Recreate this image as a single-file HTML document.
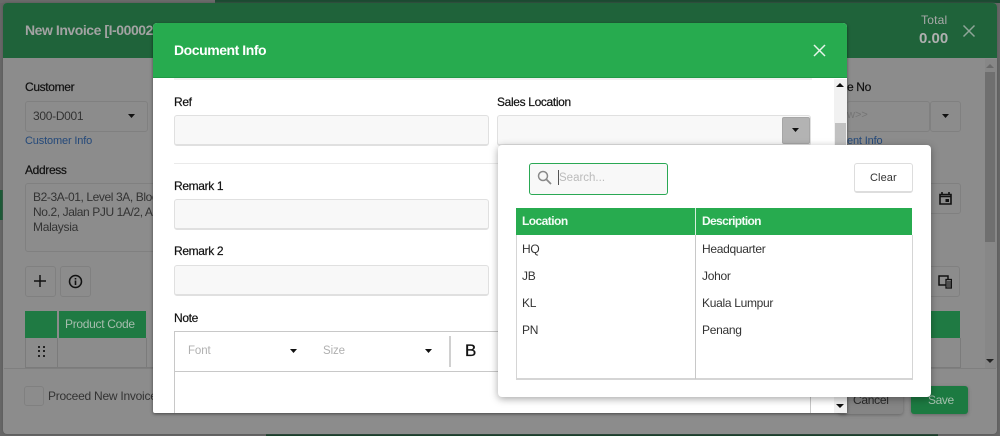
<!DOCTYPE html>
<html><head><meta charset="utf-8"><style>
html,body{margin:0;padding:0}
body{width:1000px;height:436px;overflow:hidden;position:relative;background:#666;font-family:"Liberation Sans",Arial,sans-serif;font-size:12px;color:#222}
div,span,svg{position:absolute;box-sizing:border-box}
.t{white-space:nowrap;line-height:14px}
.b .t{color:#222}
.bi{background:#8c8c8c;border:1px solid #808080;border-radius:3px}
.in{background:#f8f8f8;border:1px solid #e0e0e0;border-bottom:2px solid #e0e0e0;border-radius:3px}
.l{font-size:12px;color:#111;letter-spacing:-.35px;-webkit-text-stroke:.2px #111}
.r{color:#333;font-size:12px;letter-spacing:-.3px}
</style></head><body>
<div style="left:0;top:0;width:215px;height:3px;background:#6a6a6a"></div>
<div style="left:215px;top:0;width:785px;height:3px;background:#1b4a31"></div>
<div style="left:0;top:190px;width:3px;height:30px;background:#1b5a36"></div>
<div style="left:266px;top:433px;width:672px;height:3px;background:#173f2a"></div>

<div class="b" style="left:3px;top:3px;width:994px;height:431px;background:#8c8c8c;border-radius:4px;box-shadow:0 0 2px #555">
 <div style="left:0;top:0;width:994px;height:55px;background:#1f633a;border-radius:4px 4px 0 0"></div>
</div>
<div class="t" style="left:25px;top:23px;font-size:14px;font-weight:bold;color:#a3a3a3;letter-spacing:-.45px">New Invoice [I-00002</div>
<div class="t" style="left:921px;top:13px;font-size:12px;color:#a9a9a9;letter-spacing:.2px">Total</div>
<div class="t" style="left:919px;top:32px;font-size:15px;font-weight:bold;color:#b0b0b0">0.00</div>
<svg style="left:962px;top:24px" width="14" height="14"><path d="M1.5 1.500L12.500 12.500M12.500 1.500L1.500 12.500" stroke="#8fa598" stroke-width="1.500"/></svg>

<div class="t l" style="left:25px;top:80px">Customer</div>
<div class="bi" style="left:25px;top:101px;width:123px;height:31px"></div>
<div class="t r" style="left:33px;top:109px">300-D001</div>
<svg style="left:128px;top:114px" width="7" height="4"><path d="M0 0H7L3.500 4Z" fill="#111"/></svg>
<div class="t" style="left:25px;top:134px;font-size:11px;color:#24497a;letter-spacing:-.15px">Customer Info</div>
<div class="t l" style="left:25px;top:163px">Address</div>
<div class="bi" style="left:25px;top:183px;width:140px;height:69px"></div>
<div class="t r" style="left:33px;top:190px;width:120px;overflow:hidden;letter-spacing:-.4px">B2-3A-01, Level 3A, Block</div>
<div class="t r" style="left:33px;top:205px;width:120px;overflow:hidden;letter-spacing:-.4px">No.2, Jalan PJU 1A/2, Ara</div>
<div class="t r" style="left:33px;top:220px">Malaysia</div>
<div class="bi" style="left:25px;top:266px;width:31px;height:31px"></div>
<svg style="left:33px;top:274px" width="14" height="14"><path d="M7 1V13M1 7H13" stroke="#111" stroke-width="1.500"/></svg>
<div class="bi" style="left:60px;top:266px;width:31px;height:31px"></div>
<svg style="left:68px;top:274px" width="15" height="15" viewBox="0 0 15 15"><circle cx="7.500" cy="7.500" r="6" fill="none" stroke="#111" stroke-width="1.500"/><path d="M7.500 6.500V11M7.500 4V5.500" stroke="#111" stroke-width="1.600"/></svg>
<div style="left:25px;top:311px;width:122px;height:27px;background:#1f7a43"></div>
<div style="left:57px;top:311px;width:2px;height:27px;background:#8c8c8c"></div>
<div style="left:146px;top:311px;width:2px;height:27px;background:#8c8c8c"></div>
<div class="t" style="left:65px;top:317px;color:#a6bdae;letter-spacing:-.3px">Product Code</div>
<div style="left:25px;top:338px;width:128px;height:30px;border-left:1px solid #7b7b7b;border-bottom:1px solid #7b7b7b"></div>
<div style="left:57px;top:338px;width:1px;height:30px;background:#7b7b7b"></div>
<div style="left:146px;top:338px;width:1px;height:30px;background:#7b7b7b"></div>
<svg style="left:38px;top:345px" width="8" height="13"><g fill="#222"><rect x="0" y="1" width="2" height="2"/><rect x="5" y="1" width="2" height="2"/><rect x="0" y="5" width="2" height="2"/><rect x="5" y="5" width="2" height="2"/><rect x="0" y="10" width="2" height="2"/><rect x="5" y="10" width="2" height="2"/></g></svg>
<div style="left:4px;top:368px;width:992px;height:1px;background:#7f7f7f"></div>
<div class="bi" style="left:24px;top:386px;width:20px;height:20px"></div>
<div class="t r" style="left:48px;top:389px;letter-spacing:-.25px">Proceed New Invoice</div>

<div class="t l" style="left:847px;top:80px">e No</div>
<div class="bi" style="top:101px;height:31px;left:847px;width:83px;border-left:0"></div>
<div class="t" style="left:847px;top:108px;font-size:11px;color:#757575">w&gt;&gt;</div>
<div class="bi" style="left:930px;top:101px;width:31px;height:31px"></div>
<svg style="left:942px;top:114px" width="7" height="4"><path d="M0 0H7L3.500 4Z" fill="#111"/></svg>
<div class="t" style="left:847px;top:134px;font-size:11px;color:#24497a;letter-spacing:-.15px">ent Info</div>
<div class="bi" style="left:925px;top:183px;width:36px;height:31px"></div>
<svg style="left:939px;top:191px" width="13" height="14" viewBox="0 0 13 14"><path d="M1 3.500H12V13H1ZM1 5.500H12" fill="none" stroke="#111" stroke-width="1.600"/><path d="M3 1V3M10 1V3" stroke="#111" stroke-width="1.600"/><rect x="6.500" y="8" width="3.500" height="3" fill="#111"/></svg>
<div class="bi" style="left:925px;top:266px;width:35px;height:31px"></div>
<svg style="left:938px;top:275px" width="14" height="14" viewBox="0 0 14 14"><path d="M8 10H1V1H10V4" fill="none" stroke="#111" stroke-width="1.500"/><rect x="8" y="4.500" width="5.500" height="8.500" fill="none" stroke="#111" stroke-width="1.300"/><path d="M9 7H13M9 9H13M9 11H13" stroke="#111"/></svg>
<div style="left:925px;top:311px;width:35px;height:27px;background:#1f7a43"></div>
<div style="left:925px;top:338px;width:36px;height:30px;border-right:1px solid #7b7b7b;border-bottom:1px solid #7b7b7b"></div>
<div style="left:985px;top:59px;width:12px;height:309px;background:#878787"></div>
<div style="left:985px;top:72px;width:10px;height:170px;background:#6f6f6f"></div>
<svg style="left:986px;top:64px" width="8" height="5"><path d="M0 4H8L4 0Z" fill="#6a6a6a"/></svg>
<svg style="left:986px;top:359px" width="8" height="5"><path d="M0 0H8L4 4Z" fill="#222"/></svg>
<div style="left:838px;top:386px;width:65px;height:28px;background:#858585;border-radius:3px;box-shadow:0 1px 3px #666"></div>
<div class="t" style="left:853px;top:393px;color:#2a2a2a;letter-spacing:-.3px">Cancel</div>
<div style="left:911px;top:386px;width:57px;height:28px;background:#1c7a41;border-radius:3px;box-shadow:0 1px 3px #666"></div>
<div class="t" style="left:928px;top:393px;color:#a4bfad;letter-spacing:-.4px">Save</div>

<!-- Foreground modal -->
<div style="left:153px;top:23px;width:694px;height:390px;background:#fff;border-radius:4px 4px 2px 2px;box-shadow:0 1px 3px rgba(0,0,0,.5);overflow:hidden"></div>
<div style="left:153px;top:23px;width:694px;height:55px;background:#27ab4f;border-radius:4px 4px 0 0;border-bottom:1px solid #1f9a45"></div>
<div class="t" style="left:174px;top:43px;font-size:14px;font-weight:bold;color:#fff;letter-spacing:-.45px">Document Info</div>
<svg style="left:813px;top:44px" width="13" height="13"><path d="M1 1L12 12M12 1L1 12" stroke="#e6f5ea" stroke-width="1.500"/></svg>
<div style="left:174px;top:78px;width:638px;height:2px;background:#f0f0f0"></div>
<div class="t l" style="left:174px;top:95px">Ref</div>
<div class="in" style="left:174px;top:115px;width:315px;height:31px"></div>
<div class="t l" style="left:497px;top:95px">Sales Location</div>
<div class="in" style="left:497px;top:115px;width:314px;height:31px"></div>
<div style="left:782px;top:117px;width:28px;height:27px;background:#b3b3b3;border-radius:2px;border:1px solid #a6a6a6"></div>
<svg style="left:792px;top:128px" width="7" height="4"><path d="M0 0H7L3.500 4Z" fill="#111"/></svg>
<div style="left:174px;top:163px;width:324px;height:1px;background:#eaeaea"></div>
<div class="t l" style="left:174px;top:179px">Remark 1</div>
<div class="in" style="left:174px;top:199px;width:315px;height:31px"></div>
<div class="t l" style="left:174px;top:244px">Remark 2</div>
<div class="in" style="left:174px;top:265px;width:315px;height:31px"></div>
<div class="t l" style="left:174px;top:311px">Note</div>
<div style="left:174px;top:331px;width:637px;height:82px;border:1px solid #c8c8c8;border-bottom:0"></div>
<div style="left:174px;top:371px;width:637px;height:1px;background:#c8c8c8"></div>
<div class="t" style="left:188px;top:344px;font-size:11.500px;color:#b0b0b0;letter-spacing:-.1px">Font</div>
<svg style="left:290px;top:349px" width="7" height="4"><path d="M0 0H7L3.500 4Z" fill="#111"/></svg>
<div class="t" style="left:323px;top:344px;font-size:11.500px;color:#b0b0b0;letter-spacing:-.1px">Size</div>
<svg style="left:425px;top:349px" width="7" height="4"><path d="M0 0H7L3.500 4Z" fill="#111"/></svg>
<div style="left:449px;top:336px;width:2px;height:31px;background:#d0d0d0"></div>
<div class="t" style="left:465px;top:344px;font-size:17px;color:#111;-webkit-text-stroke:.3px #111">B</div>
<div style="left:834px;top:79px;width:13px;height:334px;background:#f1f1f1"></div>
<div style="left:835px;top:123px;width:11px;height:30px;background:#c1c1c1"></div>
<svg style="left:836px;top:83px" width="8" height="5"><path d="M0 4H8L4 0Z" fill="#111"/></svg>
<svg style="left:836px;top:404px" width="8" height="5"><path d="M0 0H8L4 4Z" fill="#111"/></svg>

<!-- Popup -->
<div style="left:498px;top:145px;width:433px;height:252px;background:#fff;border-radius:4px;box-shadow:0 2px 8px rgba(0,0,0,.35)"></div>
<div style="left:529px;top:163px;width:139px;height:32px;background:#f8f8f8;border:1px solid #2aa854;border-radius:3px"></div>
<svg style="left:537px;top:170px" width="15" height="15" viewBox="0 0 15 15"><circle cx="6" cy="6" r="4.500" fill="none" stroke="#8a8a8a" stroke-width="1.500"/><path d="M9.500 9.500L14 14" stroke="#8a8a8a" stroke-width="1.700"/></svg>
<div style="left:558px;top:170px;width:1px;height:15px;background:#555"></div>
<div class="t" style="left:559px;top:171px;font-size:11.500px;color:#bbb">Search...</div>
<div style="left:854px;top:163px;width:59px;height:30px;background:#fff;border:1px solid #ddd;border-bottom:2px solid #ddd;border-radius:3px"></div>
<div class="t" style="left:870px;top:171px;font-size:11px;color:#333;letter-spacing:.1px">Clear</div>
<div style="left:516px;top:208px;width:396px;height:27px;background:#27ab4f"></div>
<div style="left:695px;top:208px;width:1px;height:27px;background:#d5eedd"></div>
<div class="t" style="left:522px;top:214px;font-size:12px;font-weight:bold;color:#f2fbf5;letter-spacing:-.55px">Location</div>
<div class="t" style="left:702px;top:214px;font-size:12px;font-weight:bold;color:#f2fbf5;letter-spacing:-.65px">Description</div>
<div style="left:516px;top:235px;width:397px;height:145px;border:1px solid #d5d5d5;border-top:0;border-bottom:2px solid #d5d5d5"></div>
<div style="left:695px;top:235px;width:1px;height:144px;background:#c8c8c8"></div>
<div class="t r" style="left:522px;top:242px">HQ</div><div class="t r" style="left:702px;top:242px">Headquarter</div>
<div class="t r" style="left:522px;top:269px">JB</div><div class="t r" style="left:702px;top:269px">Johor</div>
<div class="t r" style="left:522px;top:296px">KL</div><div class="t r" style="left:702px;top:296px">Kuala Lumpur</div>
<div class="t r" style="left:522px;top:323px">PN</div><div class="t r" style="left:702px;top:323px">Penang</div>
</body></html>
